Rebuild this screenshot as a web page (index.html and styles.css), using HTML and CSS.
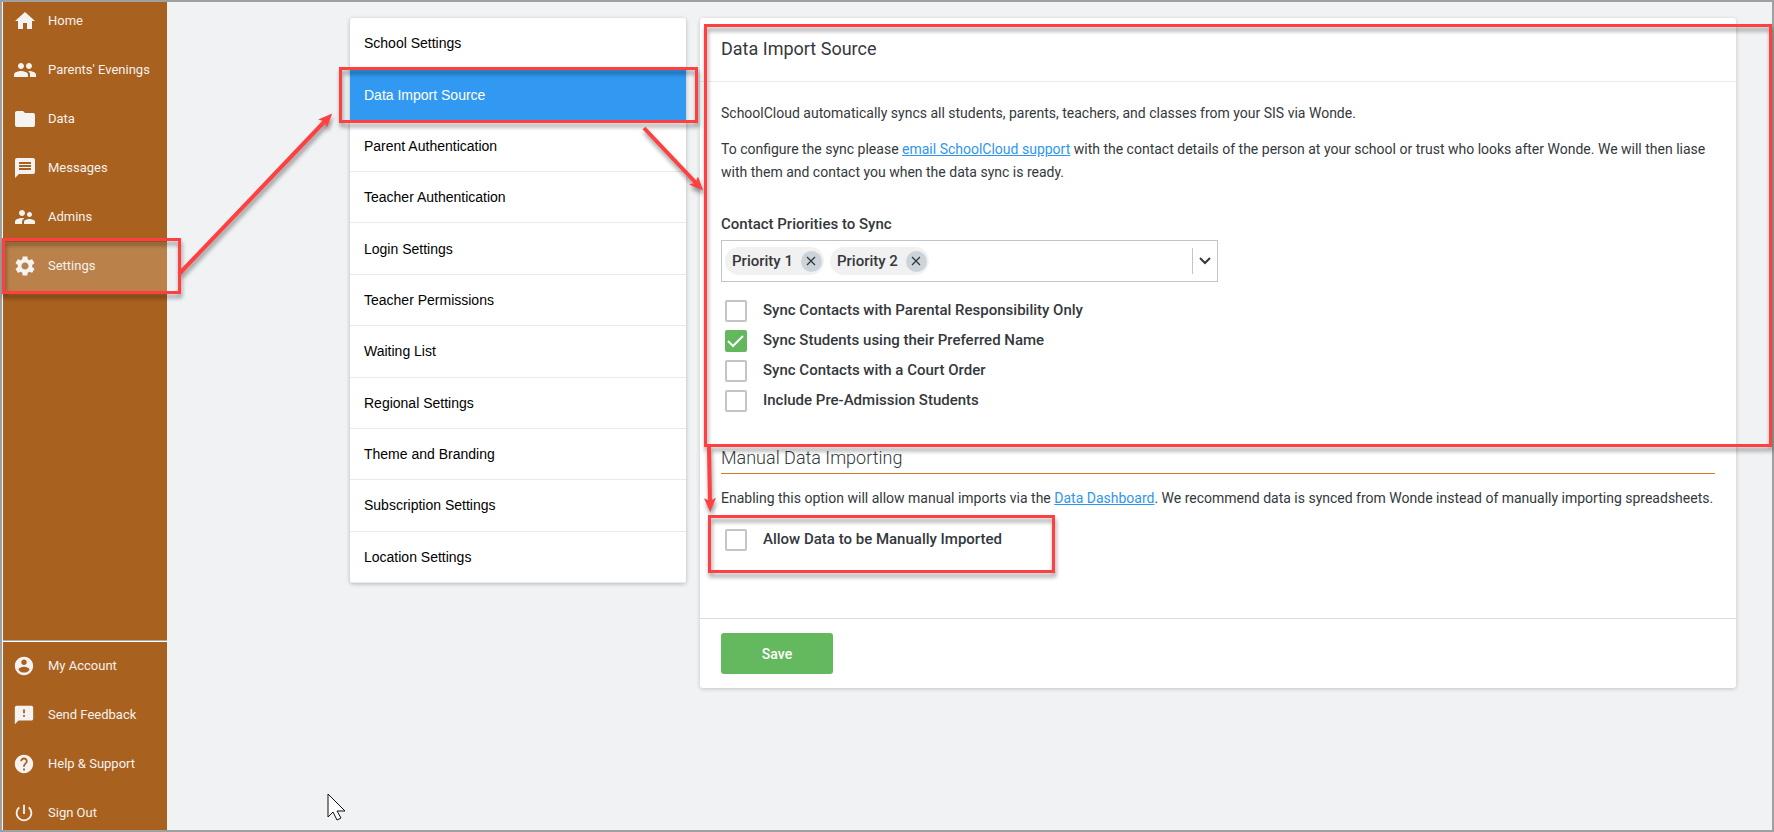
FILE: index.html
```html
<!doctype html>
<html lang="en">
<head>
  <meta charset="UTF-8">
  <title>Data Import Source</title>
  <link rel="stylesheet" href="styles.css">
</head>
<body>
  <div class="page">
    <div class="sidebar">
      <ul class="nav nav-top">
        <li><a href="#"><svg viewBox="0 0 24 24"><path d="M10 20v-6h4v6h5v-8h3L12 3 2 12h3v8z"/></svg>Home</a></li>
        <li><a href="#"><svg viewBox="0 0 24 24"><path d="M16 11c1.66 0 2.99-1.34 2.99-3S17.66 5 16 5c-1.66 0-3 1.34-3 3s1.34 3 3 3zm-8 0c1.66 0 2.99-1.34 2.99-3S9.66 5 8 5C6.34 5 5 6.34 5 8s1.34 3 3 3zm0 2c-2.33 0-7 1.17-7 3.5V19h14v-2.5c0-2.33-4.67-3.5-7-3.5zm8 0c-.29 0-.62.02-.97.05 1.16.84 1.97 1.97 1.97 3.45V19h6v-2.5c0-2.33-4.67-3.5-7-3.5z"/></svg>Parents' Evenings</a></li>
        <li><a href="#"><svg viewBox="0 0 24 24"><path d="M10 4H4c-1.1 0-1.99.9-1.99 2L2 18c0 1.1.9 2 2 2h16c1.1 0 2-.9 2-2V8c0-1.1-.9-2-2-2h-8l-2-2z"/></svg>Data</a></li>
        <li><a href="#"><svg viewBox="0 0 24 24"><path d="M20 2H4c-1.1 0-1.99.9-1.99 2L2 22l4-4h14c1.1 0 2-.9 2-2V4c0-1.1-.9-2-2-2zm-2 12H6v-2h12v2zm0-3H6V9h12v2zm0-3H6V6h12v2z"/></svg>Messages</a></li>
        <li><a href="#"><svg viewBox="0 0 24 24"><path d="M16.5 12c1.38 0 2.49-1.12 2.49-2.5S17.88 7 16.5 7C15.12 7 14 8.12 14 9.5s1.12 2.5 2.5 2.5zM9 11c1.66 0 2.99-1.34 2.99-3S10.66 5 9 5C7.34 5 6 6.34 6 8s1.34 3 3 3zm7.5 3c-1.83 0-5.5.92-5.5 2.75V19h11v-2.25c0-1.83-3.67-2.75-5.5-2.75zM9 13c-2.33 0-7 1.17-7 3.5V19h7v-2.25c0-.85.33-2.34 2.37-3.47C10.5 13.1 9.66 13 9 13z"/></svg>Admins</a></li>
        <li class="on"><a href="#"><svg viewBox="0 0 24 24"><path d="M19.14 12.94c.04-.3.06-.61.06-.94 0-.32-.02-.64-.07-.94l2.03-1.58c.18-.14.23-.41.12-.61l-1.92-3.32c-.12-.22-.37-.29-.59-.22l-2.39.96c-.5-.38-1.03-.7-1.62-.94l-.36-2.54c-.04-.24-.24-.41-.48-.41h-3.84c-.24 0-.43.17-.47.41l-.36 2.54c-.59.24-1.13.57-1.62.94l-2.39-.96c-.22-.08-.47 0-.59.22L2.74 8.87c-.12.21-.08.47.12.61l2.03 1.58c-.05.3-.09.63-.09.94s.02.64.07.94l-2.03 1.58c-.18.14-.23.41-.12.61l1.92 3.32c.12.22.37.29.59.22l2.39-.96c.5.38 1.03.7 1.62.94l.36 2.54c.05.24.24.41.48.41h3.84c.24 0 .44-.17.47-.41l.36-2.54c.59-.24 1.13-.56 1.62-.94l2.39.96c.22.08.47 0 .59-.22l1.92-3.32c.12-.22.07-.47-.12-.61l-2.01-1.58zM12 15.6c-1.98 0-3.6-1.62-3.6-3.6s1.62-3.6 3.6-3.6 3.6 1.62 3.6 3.6-1.62 3.6-3.6 3.6z"/></svg>Settings</a></li>
      </ul>
      <ul class="nav nav-bottom">
        <li><a href="#"><svg viewBox="0 0 24 24"><path d="M12 2C6.48 2 2 6.48 2 12s4.48 10 10 10 10-4.48 10-10S17.52 2 12 2zm0 3c1.66 0 3 1.34 3 3s-1.34 3-3 3-3-1.34-3-3 1.34-3 3-3zm0 14.2c-2.5 0-4.71-1.28-6-3.22.03-1.99 4-3.08 6-3.08 1.99 0 5.97 1.09 6 3.08-1.29 1.94-3.5 3.22-6 3.22z"/></svg>My Account</a></li>
        <li><a href="#"><svg viewBox="0 0 24 24"><path d="M20 2H4c-1.1 0-1.99.9-1.99 2L2 22l4-4h14c1.1 0 2-.9 2-2V4c0-1.1-.9-2-2-2zm-7 12h-2v-2h2v2zm0-4h-2V6h2v4z"/></svg>Send Feedback</a></li>
        <li><a href="#"><svg viewBox="0 0 24 24"><path d="M12 2C6.48 2 2 6.48 2 12s4.48 10 10 10 10-4.48 10-10S17.52 2 12 2zm1 17h-2v-2h2v2zm2.07-7.75l-.9.92C13.45 12.9 13 13.5 13 15h-2v-.5c0-1.1.45-2.1 1.17-2.83l1.24-1.26c.37-.36.59-.86.59-1.41 0-1.1-.9-2-2-2s-2 .9-2 2H8c0-2.21 1.79-4 4-4s4 1.79 4 4c0 .88-.36 1.68-.93 2.25z"/></svg>Help &amp; Support</a></li>
        <li><a href="#"><svg viewBox="0 0 24 24"><path d="M13 3h-2v10h2V3zm4.83 2.17l-1.42 1.42C17.99 7.86 19 9.81 19 12c0 3.87-3.13 7-7 7s-7-3.13-7-7c0-2.19 1.01-4.14 2.58-5.42L6.17 5.17C4.23 6.82 3 9.26 3 12c0 4.97 4.03 9 9 9s9-4.03 9-9c0-2.74-1.23-5.18-3.17-6.83z"/></svg>Sign Out</a></li>
      </ul>
    </div>

    <div class="content">
      <ul class="menu">
        <li><a href="#">School Settings</a></li>
        <li class="on"><a href="#">Data Import Source</a></li>
        <li><a href="#">Parent Authentication</a></li>
        <li><a href="#">Teacher Authentication</a></li>
        <li><a href="#">Login Settings</a></li>
        <li><a href="#">Teacher Permissions</a></li>
        <li><a href="#">Waiting List</a></li>
        <li><a href="#">Regional Settings</a></li>
        <li><a href="#">Theme and Branding</a></li>
        <li><a href="#">Subscription Settings</a></li>
        <li><a href="#">Location Settings</a></li>
      </ul>

      <form class="panel">
        <h1>Data Import Source</h1>
        <div class="panel-body">
          <p>SchoolCloud automatically syncs all students, parents, teachers, and classes from your SIS via Wonde.</p>
          <p>To configure the sync please <a href="#">email SchoolCloud support</a> with the contact details of the person at your school or trust who looks after Wonde. We will then liase with them and contact you when the data sync is ready.</p>

          <label class="field-label" for="priorities">Contact Priorities to Sync</label>
          <div class="multi">
            <span class="chip">Priority 1<button type="button" aria-label="Remove Priority 1"><svg viewBox="0 0 10 10"><path d="M1 1l8 8M9 1l-8 8"/></svg></button></span>
            <span class="chip">Priority 2<button type="button" aria-label="Remove Priority 2"><svg viewBox="0 0 10 10"><path d="M1 1l8 8M9 1l-8 8"/></svg></button></span>
            <input type="text" id="priorities">
            <button type="button" class="arrow" aria-label="Show priorities"><svg viewBox="0 0 12 8"><path d="M1 1l5 5 5-5"/></svg></button>
          </div>

          <div class="checks">
            <label><input type="checkbox">Sync Contacts with Parental Responsibility Only</label>
            <label><input type="checkbox" checked>Sync Students using their Preferred Name</label>
            <label><input type="checkbox">Sync Contacts with a Court Order</label>
            <label><input type="checkbox">Include Pre-Admission Students</label>
          </div>

          <h2>Manual Data Importing</h2>
          <p>Enabling this option will allow manual imports via the <a href="#">Data Dashboard</a>. We recommend data is synced from Wonde instead of manually importing spreadsheets.</p>
          <div class="checks">
            <label><input type="checkbox">Allow Data to be Manually Imported</label>
          </div>
        </div>
        <div class="panel-footer">
          <button type="submit" class="save">Save</button>
        </div>
      </form>
    </div>
  </div>

  <!-- red boxes and arrows over the page -->
  <svg class="marks" width="1774" height="832">
    <defs>
      <marker id="head" markerUnits="userSpaceOnUse" markerWidth="14" markerHeight="12" refX="5" refY="6" orient="auto">
        <path d="M0 0l14 6-14 6 3-6z" fill="#ff4040"/>
      </marker>
    </defs>
    <g fill="none" stroke="#ff4040" stroke-width="3">
      <rect x="3.5" y="239.5" width="176" height="53"/>
      <rect x="340.5" y="68.5" width="356" height="53"/>
      <rect x="705.5" y="25.5" width="1065" height="420"/>
      <rect x="709.5" y="516.5" width="344" height="55"/>
    </g>
    <g stroke="#ff4040" stroke-width="4">
      <path d="M179 274L326 120" marker-end="url(#head)"/>
      <path d="M644 128L697 184" marker-end="url(#head)"/>
      <path d="M709 447L710 503" marker-end="url(#head)"/>
    </g>
  </svg>
  <svg class="cursor" viewBox="0 0 20 29"><path d="M1 1v23l5-5 4 8 4-2-4-7h8z"/></svg>
</body>
</html>
```
FILE: styles.css
```css
*{margin:0;
  padding:0;
  box-sizing:border-box;
  list-style:none;}
body{font-family:Roboto, sans-serif;
     font-size:14px;
     color:#34383c;
     background:#f1f2f4;}
.page{display:flex;
      height:100vh;
      border:2px solid #a0a0a0;
      overflow:hidden;}

/* sidebar */
.sidebar{display:flex;
         flex-direction:column;
         justify-content:space-between;
         width:165px;
         flex-shrink:0;
         border-left:1px solid #fff;
         background:#a8611f;}
.nav-top{margin-top:-5px;}
.nav-bottom{margin-bottom:-8px;
            border-top:2px groove #fff;}
.nav a{display:flex;
       align-items:center;
       gap:11px;
       height:49px;
       padding:0 0 2px 10px;
       font-size:13px;
       color:#f5f1ee;
       text-decoration:none;}
.nav svg{width:24px;
         height:24px;
         fill:#f5f3f1;}
.nav-bottom a{gap:13px;}
.nav-bottom svg{width:22px;
                height:22px;}
.nav .on{background:#bb814b;}

.content{display:flex;
         flex:1;
         align-items:flex-start;
         gap:14px;
         padding:16px 36px 0 183px;}

/* settings menu */
.menu{display:grid;
      grid-auto-rows:1fr;
      flex:0 0 336px;
      min-height:565px;
      border-radius:3px;
      overflow:hidden;
      background:#fff;
      box-shadow:0 1px 4px rgba(0,0,0,.25);}
.menu li{display:grid;
         border-bottom:1px solid #e8eaec;}
.menu a{display:flex;
        align-items:center;
        padding:0 14px;
        font-family:"Liberation Sans", sans-serif;
        color:#000;
        text-decoration:none;}
.menu .on{background:#3199f1;
          border-color:#3199f1;}
.menu .on a{color:#fff;}

/* panel */
.panel{flex:1;
       min-width:0;
       border-radius:3px;
       background:#fff;
       box-shadow:0 1px 4px rgba(0,0,0,.2);}
.panel h1{padding:0 21px 2px;
          border-bottom:1px solid #e8eaec;
          font-size:18px;
          font-weight:400;
          line-height:61px;}
.panel-body{padding:20px 21px 64px;}
.panel p{margin-bottom:13px;
         line-height:23px;}
.panel a{color:#2f96f0;}
.field-label{display:block;
             margin-top:29px;
             font-size:15px;
             font-weight:500;
             line-height:22px;}
.multi{display:flex;
       align-items:center;
       gap:6px;
       width:50%;
       height:42px;
       margin-top:5px;
       padding-left:3px;
       border:1px solid #c2c4c6;}
.multi input{flex:1;
             min-width:0;
             border:0;
             outline:0;}
.multi button{border:0;
              background:none;}
.multi svg{display:block;
           margin:auto;
           fill:none;
           stroke:#34383c;}
.chip{display:flex;
      align-items:center;
      gap:8px;
      height:28px;
      padding:0 2px 0 7px;
      border-radius:14px;
      background:#f1f1f1;
      font-size:15px;
      font-weight:500;}
.multi .chip button{width:21px;
                    height:21px;
                    border-radius:50%;
                    background:#cdd3da;}
.chip svg{width:10px;
          height:10px;
          stroke-width:1.3;}
.multi .arrow{width:25px;
              height:26px;
              border-left:1px solid #c2c4c6;}
.arrow svg{width:12px;
           height:8px;
           stroke-width:2;}
.checks{padding:13px 4px 0;}
.checks label{display:flex;
              align-items:center;
              gap:16px;
              height:30px;
              font-size:15px;
              font-weight:500;}
.checks input{appearance:none;
              width:22px;
              height:22px;
              margin-top:2px;
              border:2px solid #c4c4c4;
              border-radius:2px;
              background:#fff;}
.checks input:checked{border-color:#63b75d;
                      background:#63b75d url("data:image/svg+xml,%3Csvg xmlns='http://www.w3.org/2000/svg' viewBox='0 0 18 18'%3E%3Cpath d='M1 9l5 5L16 4' fill='none' stroke='white' stroke-width='2'/%3E%3C/svg%3E") center/18px no-repeat;}
.panel h2{margin-top:28px;
          margin-bottom:13px;
          border-bottom:1px solid #cf7c30;
          font-size:18px;
          font-weight:300;
          line-height:30px;}
.panel h2 ~ p{margin:0;}
.panel h2 ~ .checks{padding-top:14px;}
.panel-footer{padding:14px 21px;
              border-top:1px solid #d9dbdd;}
.save{width:112px;
      height:41px;
      border:0;
      border-radius:3px;
      background:#64b85e;
      color:#fff;
      font-family:inherit;
      font-size:14px;
      font-weight:500;}

/* overlay */
.marks{position:absolute;
       top:0;
       left:0;
       pointer-events:none;
       filter:drop-shadow(1px 4px 2px rgba(0,0,0,.4));}
.cursor{position:absolute;
        left:327px;
        top:793px;
        width:20px;
        height:29px;
        fill:#fff;
        stroke:#111;}
```
